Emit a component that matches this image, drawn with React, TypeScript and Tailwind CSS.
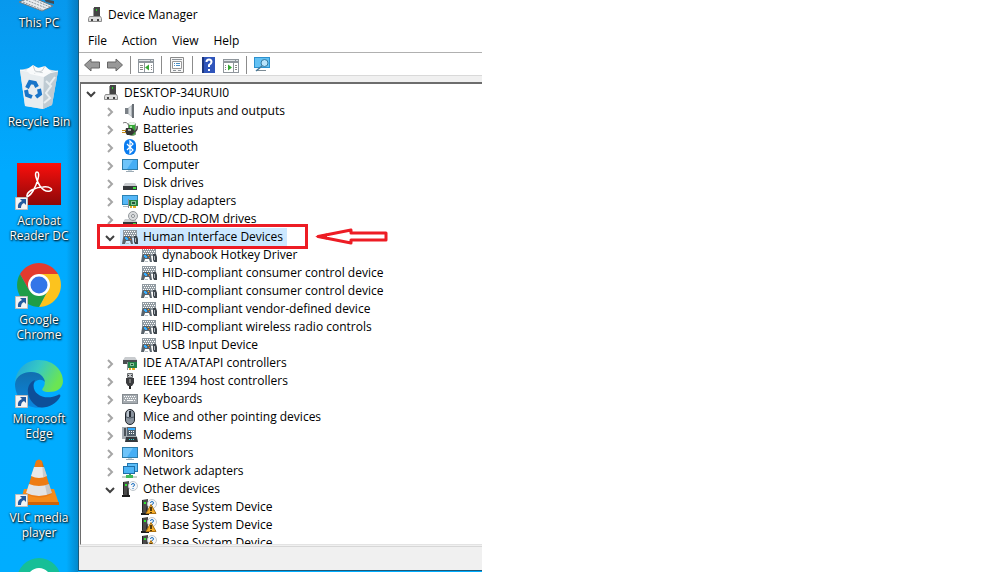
import React, { useState } from 'react';

type IconName =
  | 'root' | 'audio' | 'battery' | 'bluetooth' | 'monitor' | 'disk' | 'display' | 'dvd' | 'hid'
  | 'ide' | 'ieee' | 'keyboard' | 'mouse' | 'modem' | 'network' | 'other' | 'warning';

interface DeviceNode {
  name: string;
  icon: IconName;
  open?: boolean;
  selected?: boolean;
  children?: DeviceNode[];
}

const devices: DeviceNode = {
  name: 'DESKTOP-34URUI0',
  icon: 'root',
  open: true,
  children: [
    { name: 'Audio inputs and outputs', icon: 'audio', children: [] },
    { name: 'Batteries', icon: 'battery', children: [] },
    { name: 'Bluetooth', icon: 'bluetooth', children: [] },
    { name: 'Computer', icon: 'monitor', children: [] },
    { name: 'Disk drives', icon: 'disk', children: [] },
    { name: 'Display adapters', icon: 'display', children: [] },
    { name: 'DVD/CD-ROM drives', icon: 'dvd', children: [] },
    {
      name: 'Human Interface Devices',
      icon: 'hid',
      open: true,
      selected: true,
      children: [
        { name: 'dynabook Hotkey Driver', icon: 'hid' },
        { name: 'HID-compliant consumer control device', icon: 'hid' },
        { name: 'HID-compliant consumer control device', icon: 'hid' },
        { name: 'HID-compliant vendor-defined device', icon: 'hid' },
        { name: 'HID-compliant wireless radio controls', icon: 'hid' },
        { name: 'USB Input Device', icon: 'hid' },
      ],
    },
    { name: 'IDE ATA/ATAPI controllers', icon: 'ide', children: [] },
    { name: 'IEEE 1394 host controllers', icon: 'ieee', children: [] },
    { name: 'Keyboards', icon: 'keyboard', children: [] },
    { name: 'Mice and other pointing devices', icon: 'mouse', children: [] },
    { name: 'Modems', icon: 'modem', children: [] },
    { name: 'Monitors', icon: 'monitor', children: [] },
    { name: 'Network adapters', icon: 'network', children: [] },
    {
      name: 'Other devices',
      icon: 'other',
      open: true,
      children: [
        { name: 'Base System Device', icon: 'warning' },
        { name: 'Base System Device', icon: 'warning' },
        { name: 'Base System Device', icon: 'warning' },
      ],
    },
  ],
};

const drive = (
  <>
    <path d="M3 8h10l2 3H1z" fill="#c9cccf" />
    <path d="M1 11h14v4H1z" fill="#34373a" />
    <path d="M11 12h3v2h-3z" fill="#3ddc3d" />
  </>
);

const tower = (
  <>
    <path d="M1 1l6-1v14H1z" fill="#4a4a4a" />
    <path d="M1 1h1v12H1z" fill="#222" />
    <path d="M3 3h2v2H3z" fill="#2fe62f" />
    <path d="M0 14h8v2H0z" fill="#1c1c1c" />
    <path d="M5 6l2 8H5z" fill="#2c2c2c" />
    <circle cx="11" cy="5" r="4.500" fill="#f5f7f9" stroke="#c0c7cd" />
    <path d="M9.500 4q0-1.500 1.500-1.500T12.500 4q0 1-1.500 1.500V6M11 7v1" fill="none" stroke="#1c6fc0" />
  </>
);

const glyphs: Record<IconName, React.ReactNode> = {
  root: (
    <>
      <path d="M7 0h6v9H7z" fill="#454545" />
      <path d="M6 1h1v8H6z" fill="#999" />
      <path d="M9 2h1v2H9z" fill="#22dd22" />
      <path d="M2.500 9.500h11l1 2v3h-13v-3z" fill="#dedede" stroke="#8d8d8d" />
      <path d="M4 12h2v2H4zM10 12h2v2h-2z" fill="#444" />
    </>
  ),
  audio: (
    <>
      <path d="M3 5h3v6H3z" fill="#7b8187" />
      <path d="M6 5l5-4v14l-5-4z" fill="#aeb4b9" />
      <path d="M10 1h2v14h-2z" fill="#6a7076" />
      <path d="M7 5l2-2v10l-2-2z" fill="#d9dde0" />
    </>
  ),
  battery: (
    <>
      <path d="M6.500 2.500q3.500-2 7 0v11q-3 2-7 0z" fill="#35a835" stroke="#7b927b" />
      <ellipse cx="10" cy="2.500" rx="3.500" ry="1.500" fill="#eaf4ea" />
      <path d="M8 5h2v7H8z" fill="#9be89b" />
      <path d="M1 2q4-2 6 3" fill="none" stroke="#777" />
      <path d="M4 7h6l2 2v3l-2 2H5L3 11z" fill="#343434" />
      <path d="M6 8h3v2H6z" fill="#a5a5a5" />
      <path d="M0 9.500h4M0 11.500h4" stroke="#c68c1c" />
      <path d="M11 11q5-1 4-6" fill="none" stroke="#444" strokeWidth="1.500" />
    </>
  ),
  bluetooth: (
    <>
      <rect x="2" width="12" height="16" rx="6" fill="#0a7cf0" />
      <path d="M5 5l6 6-3 3V2l3 3-6 6" fill="none" stroke="#fff" strokeWidth="1.200" />
    </>
  ),
  monitor: (
    <>
      <path d="M0 2h16v11H0z" fill="#2e7ca9" />
      <path d="M1 3h14v9H1z" fill="#46aef5" />
      <path d="M1 3h10L5 12H1z" fill="#6ec4fa" />
      <path d="M6 13h4v1H6z" fill="#c8d4dc" />
      <path d="M4 14h8v1H4z" fill="#9cabb5" />
    </>
  ),
  disk: drive,
  display: (
    <>
      <path d="M0 2h16v10H0z" fill="#2a82b5" />
      <path d="M1 3h14v8H1z" fill="#55b7f7" />
      <path d="M1 13h5v1H1z" fill="#aebcc5" />
      <path d="M6 6h1v9H6z" fill="#8b9196" />
      <path d="M7 7h9v6H7z" fill="#278341" />
      <path d="M9 8h5v4H9z" fill="#84c591" />
      <path d="M10 9h3v2h-3z" fill="#24543a" />
      <path d="M8 13h2v2H8zM11 13h3v2h-3z" fill="#e3a823" />
    </>
  ),
  dvd: (
    <>
      {drive}
      <circle cx="11" cy="5" r="4.500" fill="#dadcde" stroke="#94999d" />
      <circle cx="11" cy="5" r="1.500" fill="#fff" stroke="#858b90" />
    </>
  ),
  hid: (
    <>
      <path d="M1 1h14v8H1z" fill="#929ba2" />
      <path d="M2 2.500h12M3 4.500h12M2 6.500h12" stroke="#fff" strokeDasharray="1 1" />
      <path d="M2 7h7l1 2 1 6H9l-1-3H4l-1 3H0l1-6z" fill="#59636b" />
      <path d="M3 8h2v1h1v2H4v-1H3z" fill="#35adff" />
      <path d="M7 8h1v1H7z" fill="#ffb020" />
      <path d="M8 10h1v1H8z" fill="#ee6c2c" />
      <path d="M4 14h3v1H4z" fill="#b9c0c5" />
      <path d="M12 7h3l1 3v5h-3l-1-2z" fill="#3d444b" />
      <path d="M13 9h1v4h-1z" fill="#a9b1b8" />
    </>
  ),
  ide: (
    <>
      <path d="M3 2h10l2 3H1z" fill="#c9cccf" />
      <path d="M1 5h14v4H1z" fill="#4a4d50" />
      <path d="M5 7h1v8H5z" fill="#8b9196" />
      <path d="M6 7h9v6H6z" fill="#238048" />
      <path d="M8 8h4v3H8z" fill="#82c394" />
      <path d="M9 9h2v1H9z" fill="#1d4932" />
      <path d="M7 13h2v2H7zM10 13h3v2h-3z" fill="#e3a823" />
    </>
  ),
  ieee: (
    <>
      <path d="M5.500 .5h5v4h-5z" fill="#c5c8cb" stroke="#6b6e70" />
      <path d="M6 2h1v1H6zM9 2h1v1H9z" fill="#333" />
      <path d="M4 5h8v5l-2 3H6l-2-3z" fill="#3b3c3e" />
      <path d="M7 13h2v3H7z" fill="#222" />
      <path d="M7 6h2v4H7z" fill="#777" />
    </>
  ),
  keyboard: (
    <>
      <path d="M0 3h16v10H0z" fill="#858b90" />
      <path d="M1 4h14v8H1z" fill="#a5abb0" />
      <path d="M2 5.500h12M3 7.500h12M2 9.500h2M12 9.500h2" stroke="#fff" strokeDasharray="1 1" />
      <path d="M5 9h6v1H5z" fill="#fff" />
    </>
  ),
  mouse: (
    <>
      <rect x="3.500" y=".5" width="9" height="15" rx="4.500" fill="#8a939e" stroke="#20252c" />
      <path d="M5 4q0-3 3-3v7H5z" fill="#bbc4ce" />
      <path d="M7 2h2v6H7z" fill="#252b33" />
      <path d="M4 8q4 2 8 0" fill="none" stroke="#4b5560" />
    </>
  ),
  modem: (
    <>
      <path d="M5 0h9v10H5z" fill="#55636e" />
      <path d="M6 1h7v2H6z" fill="#35adff" />
      <path d="M7 4.500h6M7 6.500h6" stroke="#fff" strokeDasharray="1 1" />
      <path d="M0 0h5v11H0z" fill="#a5adb4" />
      <path d="M2 1h2v8H2z" fill="#4b535a" />
      <path d="M0 9h15v3H0z" fill="#a6adb2" />
      <path d="M4 10h11l1 5H3z" fill="#33383d" />
      <path d="M7 12.500h5" stroke="#35d4d4" strokeDasharray="1 1" />
    </>
  ),
  network: (
    <>
      <path d="M5 0h11v9H5z" fill="#2478b1" />
      <path d="M6 1h9v7H6z" fill="#5bbdf8" />
      <path d="M1 3h12v8H1z" fill="#1f6fa8" />
      <path d="M2 4h10v6H2z" fill="#4db4f6" />
      <path d="M7 11h2v2H7z" fill="#4a9b5a" />
      <path d="M0 13h15v2H0z" fill="#c7d3cb" />
      <path d="M4 12h7v3H4z" fill="#3fb958" />
    </>
  ),
  other: tower,
  warning: (
    <>
      {tower}
      <path d="M10 5.500l5 9H5z" fill="#f6ae28" stroke="#a96f14" strokeLinejoin="round" />
      <path d="M10 8v4M10 13v1" stroke="#1e1600" strokeWidth="1.500" />
    </>
  ),
};

const DeviceIcon = ({ name }: { name: IconName }) => (
  <svg viewBox="0 0 16 16" className="size-4 shrink-0" aria-hidden="true">
    {glyphs[name]}
  </svg>
);

const Annotation = () => (
  <>
    <div className="pointer-events-none absolute -top-1 -left-1 z-10 h-[25px] w-[211px] border-3 border-[#ed1c24]" />
    <svg viewBox="0 0 76 18" className="pointer-events-none absolute top-0 left-[213px] z-10 h-[18px] w-[76px]" aria-hidden="true">
      <path d="M4 8.500L37 2v3h35v7H37v3z" fill="#fff" stroke="#ed1c24" strokeWidth="3" strokeLinejoin="round" />
      <path d="M1 8.500l12-3v6z" fill="#ed1c24" />
    </svg>
  </>
);

const TreeItem = ({ node }: { node: DeviceNode }) => {
  const [open, setOpen] = useState(!!node.open);

  return (
    <li role="treeitem" aria-expanded={node.children ? open : undefined} aria-selected={!!node.selected}>
      <div className="relative flex h-[18px] items-center">
        {node.children ? (
          <button
            type="button"
            aria-label={`${open ? 'Collapse' : 'Expand'} ${node.name}`}
            onClick={() => setOpen(!open)}
            className="flex h-full w-[19px] shrink-0 items-center pt-0.5 pl-1"
          >
            <svg viewBox="0 0 10 10" className="size-2.5" fill="none" strokeWidth="2">
              {open ? <path d="M1 3l4 4 4-4" stroke="#404040" /> : <path d="M3 1l4 4-4 4" stroke="#a6a6a6" />}
            </svg>
          </button>
        ) : (
          <span className="w-[19px] shrink-0" />
        )}
        <span className={`flex h-full items-center gap-[5px] pr-1 pl-0.5 whitespace-nowrap ${node.selected ? 'bg-[#cce8ff]' : ''}`}>
          <DeviceIcon name={node.icon} />
          {node.name}
        </span>
        {node.selected && <Annotation />}
      </div>
      {open && node.children && node.children.length > 0 && (
        <ul role="group" className="pl-[19px]">
          {node.children.map((child, idx) => (
            <TreeItem key={idx} node={child} />
          ))}
        </ul>
      )}
    </li>
  );
};

/* Desktop shortcuts */

const shortcuts: { name: string; linked?: boolean; art: React.ReactNode }[] = [
  {
    name: 'This PC',
    art: (
      <>
        <path d="M4 38l13-5 21 9-11 5z" fill="#e8ecef" stroke="#6f7a82" />
        <path d="M8 38l20 8M11 36l20 8M14 34l21 9" stroke="#8f999f" strokeDasharray="2 1" />
        <path d="M29 35l10 2v3l-8-2z" fill="#444c52" />
      </>
    ),
  },
  {
    name: 'Recycle Bin',
    art: (
      <>
        <path d="M5 7l14-3 24 4-6 34-9 4-18-3z" fill="#d7dfe5" />
        <path d="M5 7l24 4-1 35-18-3z" fill="#e8edf0" />
        <path d="M29 11l14-3-6 34-9 4z" fill="#bfcbd3" />
        <path d="M11 7l7-5 5 3 7-2 7 6-8 5-14-3z" fill="#fafbfc" />
        <path d="M18 2l2 6 8 2M30 3l-3 5-8 2" fill="none" stroke="#c8ced2" />
        <path d="M31 18l5 5-5 7 4 5-6 5M40 14l-6 8" fill="none" stroke="#e8eef1" strokeWidth="2" />
        <path d="M5 7l24 4 14-3" fill="none" stroke="#f7fafb" />
        <path d="M12 25l3-6 5 1 2 4M24 26l1 5-4 3M17 34l-5-2-1-5" fill="none" stroke="#1975c9" strokeWidth="4" />
      </>
    ),
  },
  {
    name: 'Acrobat Reader DC',
    linked: true,
    art: (
      <>
        <defs>
          <linearGradient id="acrobat" x2="0" y2="1">
            <stop stopColor="#fb0f0c" />
            <stop offset="1" stopColor="#8c0809" />
          </linearGradient>
        </defs>
        <path d="M2 1h44v42H2z" fill="url(#acrobat)" />
        <path
          d="M22 10c-3 0-1 8 3 14 3 4 7 6 10 5 4-1 0-5-7-4-7 0-15 4-16 8-1 3 3 1 6-4 4-7 8-19 4-19z"
          fill="none"
          stroke="#fff"
          strokeWidth="1.500"
        />
      </>
    ),
  },
  {
    name: 'Google Chrome',
    linked: true,
    art: (
      <>
        <path d="M24 13h19A22 22 0 0 1 24 46l9-17z" fill="#fcc31e" />
        <path d="M33 29l-9 17A22 22 0 0 1 5 13l9 16z" fill="#1f9d48" />
        <path d="M24 13h19A22 22 0 0 0 5 13l9 16z" fill="#e33b2e" />
        <circle cx="24" cy="24" r="11" fill="#fff" />
        <circle cx="24" cy="24" r="8.500" fill="#3475e8" />
      </>
    ),
  },
  {
    name: 'Microsoft Edge',
    linked: true,
    art: (
      <>
        <defs>
          <linearGradient id="edge-top" x2="1" y2=".4">
            <stop stopColor="#1c9fdf" />
            <stop offset=".5" stopColor="#36c8c5" />
            <stop offset="1" stopColor="#6be553" />
          </linearGradient>
          <linearGradient id="edge-side" x2="0" y2="1">
            <stop stopColor="#126fae" />
            <stop offset="1" stopColor="#0a87e0" />
          </linearGradient>
        </defs>
        <path d="M0 23C1 8 12 0 24 0c15 0 24 11 24 21 0 8-7 11-14 11-6 0-8-2-6-4 5-6-1-16-12-16C8 12 2 17 0 23z" fill="url(#edge-top)" />
        <path d="M0 24c1-8 8-12 16-12 8 0 13 4 14 10-5-5-13-1-13 8 0 10 8 16 13 17C13 51 0 39 0 24z" fill="url(#edge-side)" />
        <path d="M20 20c-10 4-10 19 3 27 9 2 18-3 22-10 1-2 0-3-2-2-15 7-29-3-23-15z" fill="#0d4f99" />
      </>
    ),
  },
  {
    name: 'VLC media player',
    linked: true,
    art: (
      <>
        <path d="M9 30h30l5 15H5z" fill="#f58b1a" />
        <path d="M5 43h39v3H5z" fill="#cf6207" />
        <path d="M21 2q3-3 6 0l10 33q-12 7-26 0z" fill="#ee7b12" />
        <path d="M19 8h10l3 9q-8 4-16 0z" fill="#e8e8e8" />
        <path d="M14 25q10 4 20 0l3 9q-13 6-26 0z" fill="#e3e3e3" />
        <path d="M27 2l5 15q-2 1-4 1zM30 26l4-1 3 9-5 2z" fill="#000" opacity=".12" />
      </>
    ),
  },
  {
    name: '',
    art: (
      <>
        <circle cx="24" cy="22" r="22" fill="#16bf97" />
        <circle cx="24" cy="22" r="10" fill="none" stroke="#fff" strokeWidth="4" />
      </>
    ),
  },
];

const Desktop = () => (
  <nav aria-label="Desktop" className="w-[78px] shrink-0 overflow-hidden bg-linear-to-r from-transparent from-85% to-[#07517e]/40">
    <ul className="-mt-9">
      {shortcuts.map((item) => (
        <li key={item.name} className="h-[99px]">
          <button type="button" aria-label={item.name || 'Shortcut'} className="flex w-full flex-col items-center gap-[3px]">
            <span className="relative">
              <svg viewBox="0 0 48 48" className="size-12" aria-hidden="true">
                {item.art}
              </svg>
              {item.linked && (
                <svg viewBox="0 0 13 13" className="absolute bottom-0 left-0 size-[13px]" aria-hidden="true">
                  <path d="M.5 .5h12v12H.5z" fill="#f4f4f4" stroke="#bdbdbd" />
                  <path d="M5 2h6v6L9 6q-3 1-3 5H3q-1-5 4-7z" fill="#245a9e" />
                </svg>
              )}
            </span>
            <span className="w-16 text-center text-white [text-shadow:1px_1px_2px_#000,0_0_2px_#000]">{item.name}</span>
          </button>
        </li>
      ))}
    </ul>
  </nav>
);

/* Toolbar */

const panel = (
  <>
    <path d="M0 2h16v14H0z" fill="#8f969c" />
    <path d="M1 6h14v9H1z" fill="#fff" />
    <path d="M1 3.500h11M13 3.500h2" stroke="#dce1e5" />
  </>
);

const tools: { label: string; divider?: boolean; art: React.ReactNode }[] = [
  { label: 'Back', art: <path d="M.5 8L7 2v3h8.500v6H7v3z" fill="#999" stroke="#666" /> },
  { label: 'Forward', divider: true, art: <path d="M15.500 8L9 2v3H.5v6H9v3z" fill="#999" stroke="#666" /> },
  {
    label: 'Show or hide console tree',
    divider: true,
    art: (
      <>
        {panel}
        <path d="M6.500 6v9" stroke="#8f969c" />
        <path d="M2 8.500h3M2 10.500h3M2 12.500h3M13 8.500h1M13 10.500h1M13 12.500h1" stroke="#888" />
        <path d="M7 10.500l4-3v6z" fill="#35a832" />
      </>
    ),
  },
  {
    label: 'Properties',
    divider: true,
    art: (
      <>
        <path d="M1.500 .5h13v15h-13z" fill="#f6f6f6" stroke="#8a8a8a" />
        <path d="M3 2.500h10M4 13.500h3M9 13.500h3" stroke="#8d9399" />
        <path d="M3.500 4.500h9v7h-9z" fill="#fff" stroke="#999" />
        <path d="M5 6.500h1M7 6.500h4M5 8.500h1M7 8.500h4" stroke="#4a8fc5" />
      </>
    ),
  },
  {
    label: 'Help',
    art: (
      <>
        <path d="M2 0h13v16H2z" fill="#2f55bb" />
        <path d="M2 0h2v16H2z" fill="#1c367f" />
        <path d="M6.500 5q0-2.500 2.500-2.500T11.500 5q0 1.500-2.500 3v2M9 12v2" fill="none" stroke="#fff" strokeWidth="2" />
      </>
    ),
  },
  {
    label: 'Show or hide action pane',
    divider: true,
    art: (
      <>
        {panel}
        <path d="M10.500 6v9" stroke="#8f969c" />
        <path d="M2 8.500h1M2 10.500h1M2 12.500h1M12 8.500h2M12 10.500h2M12 12.500h2" stroke="#888" />
        <path d="M9 10.500l-4-3v6z" fill="#35a832" />
      </>
    ),
  },
  {
    label: 'Scan for hardware changes',
    art: (
      <>
        <path d="M0 0h16v11H0z" fill="#2b91cf" />
        <path d="M1 1h14v9H1z" fill="#63c1f3" />
        <path d="M3 13h9v1H3z" fill="#7d8c96" />
        <circle cx="10.500" cy="6" r="3.500" fill="#b9e3fa" stroke="#33779f" />
        <path d="M8 9l-6 5" stroke="#477998" strokeWidth="1.500" />
      </>
    ),
  },
];

const DeviceManager = () => (
  <main className="mb-px flex min-w-0 grow flex-col border-b border-l border-[#1b5a7a] bg-white">
    <header className="flex h-[29px] shrink-0 items-center gap-[5px] pl-2">
      <DeviceIcon name="root" />
      <h1>Device Manager</h1>
    </header>
    <div role="menubar" className="flex h-[23px] shrink-0 items-center gap-[15px] pl-[9px]">
      {['File', 'Action', 'View', 'Help'].map((label) => (
        <button key={label} type="button" role="menuitem">
          {label}
        </button>
      ))}
    </div>
    <div role="toolbar" className="flex h-6 shrink-0 items-center gap-[7px] border-t border-b border-t-[#b0b0b0] border-b-[#d9d9d9] pt-0.5 pl-[5px]">
      {tools.map((tool) => (
        <React.Fragment key={tool.label}>
          <button type="button" aria-label={tool.label}>
            <svg viewBox="0 0 16 16" className="size-4" aria-hidden="true">
              {tool.art}
            </svg>
          </button>
          {tool.divider && <span className="h-[18px] w-px bg-[#8c8c8c]" />}
        </React.Fragment>
      ))}
    </div>
    <div className="flex min-h-0 grow flex-col bg-[#f0f0f0] pt-1.5">
      <div className="ml-px min-h-0 grow overflow-hidden border-t-2 border-b border-l border-t-[#6d6d6d] border-b-[#e3e3e3] border-l-[#6d6d6d] bg-white">
        <ul role="tree" className="pl-px leading-[14px]">
          <TreeItem node={devices} />
        </ul>
      </div>
      <footer className="mt-px h-6 shrink-0 border-t border-[#d7d7d7]" />
    </div>
  </main>
);

const App: React.FC = () => (
  <div className="h-screen bg-white font-['Open_Sans','Noto_Sans',sans-serif] text-[12px] leading-[15px] text-black">
    <div className="flex h-full w-[48%] overflow-hidden bg-linear-to-b from-[#0798ed] via-[#00aaff] via-30% to-[#00adff]">
      <Desktop />
      <DeviceManager />
    </div>
  </div>
);

export default App;
